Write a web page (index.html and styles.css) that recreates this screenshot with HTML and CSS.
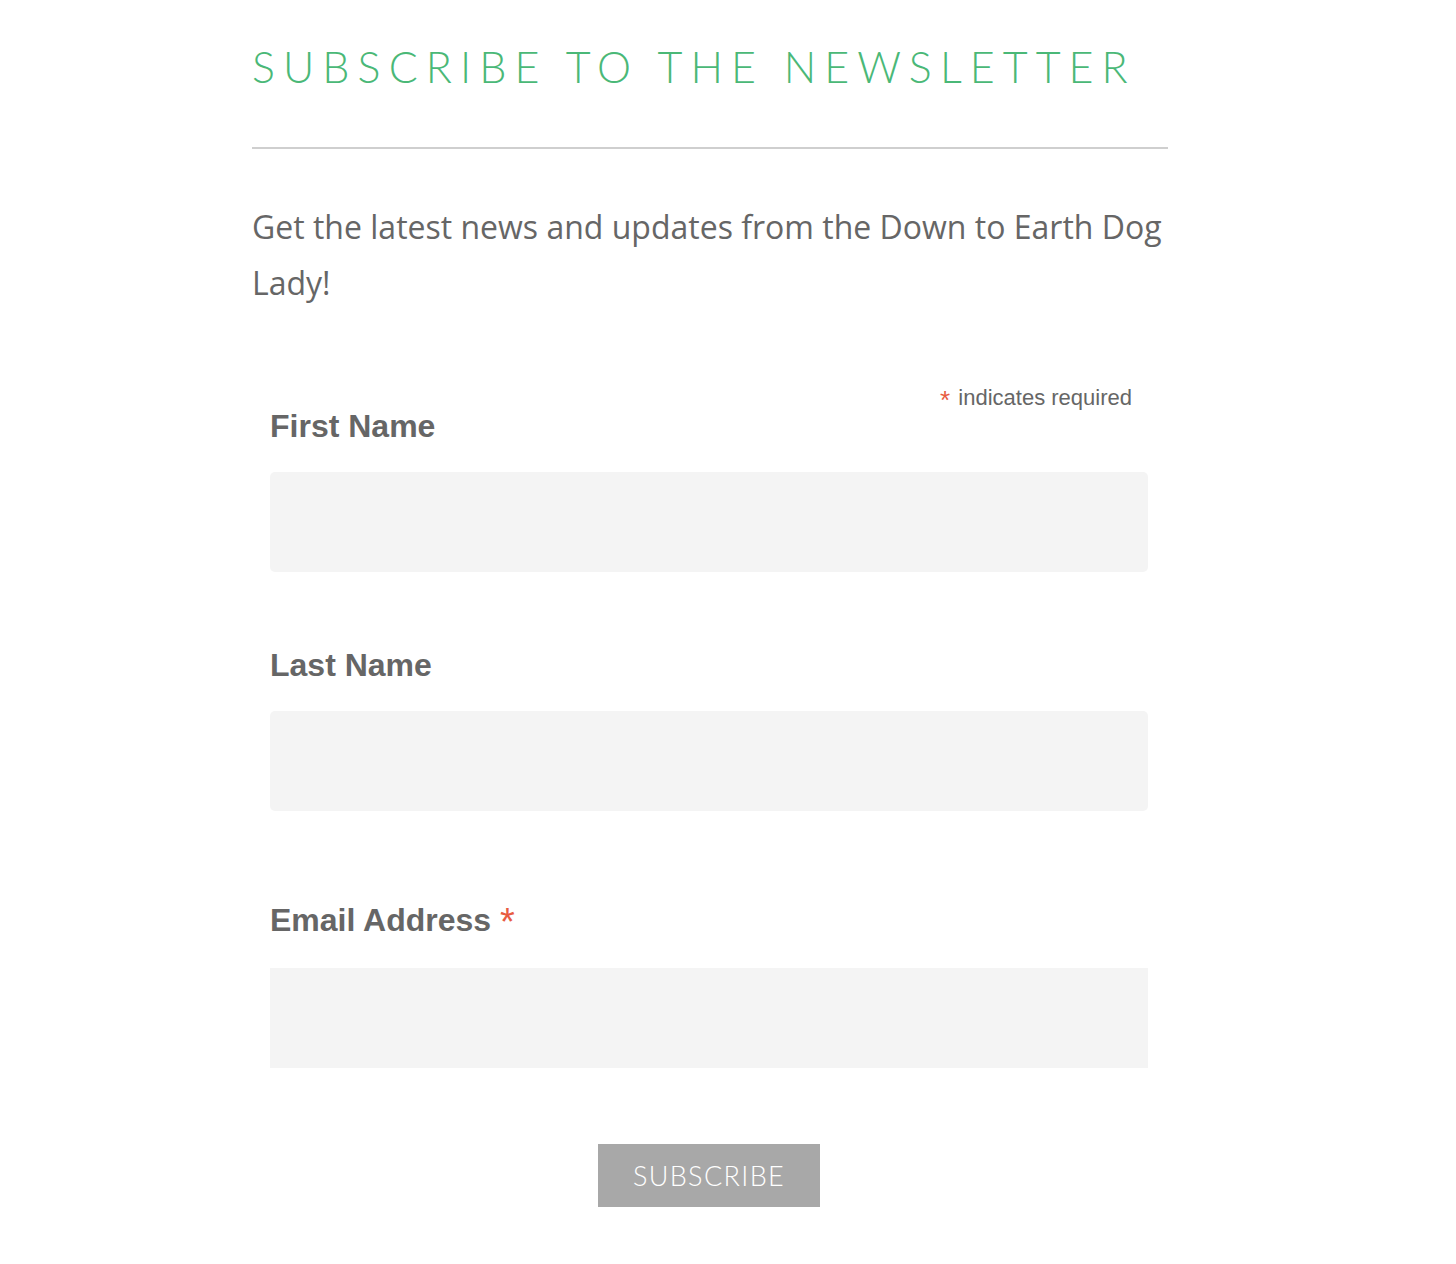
FILE: index.html
```html
<!DOCTYPE html>
<html lang="en">
<head>
<meta charset="utf-8">
<title>Subscribe to the Newsletter</title>
<link rel="stylesheet" href="styles.css">
</head>
<body>
<main class="wrap">
  <h1 class="title">Subscribe to the Newsletter</h1>
  <hr class="rule">
  <p class="intro">Get the latest news and updates from the Down to Earth Dog Lady!</p>
  <form class="signup" onsubmit="return false">
    <div class="req-note"><span class="star star-small">*</span> indicates required</div>
    <div class="field">
      <label class="label" for="fname">First Name</label>
      <input class="input" id="fname" type="text">
    </div>
    <div class="field field-2">
      <label class="label" for="lname">Last Name</label>
      <input class="input" id="lname" type="text">
    </div>
    <div class="field field-3">
      <label class="label" for="email">Email Address <span class="star star-big">*</span></label>
      <input class="input input-square" id="email" type="email">
    </div>
    <div class="actions">
      <button class="btn" type="submit">Subscribe</button>
    </div>
  </form>
</main>
</body>
</html>
```
FILE: styles.css
```css
* { box-sizing: border-box; }
html, body { margin: 0; padding: 0; background: #fff; }
.wrap {
  width: 916px;
  margin-left: 252px;
  padding-top: 45px;
  padding-bottom: 56px;
}
.title {
  margin: 0;
  font-family: "Lato", "Liberation Sans", sans-serif;
  font-weight: 300;
  font-size: 43px;
  line-height: 1;
  letter-spacing: 8.05px;
  text-transform: uppercase;
  color: #4ab877;
  white-space: nowrap;
}
.rule {
  margin: 59px 0 0;
  border: 0;
  height: 2px;
  background: #cfcfcf;
}
.intro {
  margin: 50px 0 0;
  font-family: "Open Sans", "Liberation Sans", sans-serif;
  font-size: 32px;
  line-height: 56px;
  color: #666;
}
.signup {
  margin-top: 73px;
  padding: 0 18px;
  font-family: "Liberation Sans", Arial, sans-serif;
  color: #666;
}
.req-note {
  text-align: right;
  font-size: 22px;
  line-height: 24px;
  padding-right: 18px;
  height: 23px;
}
.star { color: #e85c41; font-weight: normal; position: relative; }
.star-small { font-size: 26px; top: 4px; margin-right: 2px; }
.star-big { font-size: 38px; top: 4px; line-height: 0; }
.field { display: flex; flex-direction: column; }
.field-2 { margin-top: 74px; }
.field-3 { margin-top: 90px; }
.label {
  font-size: 32px;
  font-weight: bold;
  line-height: 38px;
  color: #666;
  margin-bottom: 27px;
}
.field-3 .label { margin-bottom: 29px; }
.input {
  width: 878px;
  height: 100px;
  border: 0;
  border-radius: 5px;
  background: #f4f4f4;
  font: inherit;
  outline: none;
}
.input-square { border-radius: 0; }
.actions {
  display: flex;
  justify-content: center;
  margin-top: 76px;
  padding-right: 2px;
}
.btn {
  width: 222px;
  height: 63px;
  border: 0;
  border-radius: 0;
  background: #a8a8a8;
  color: #fff;
  font-family: "Lato", "Liberation Sans", sans-serif;
  font-weight: 300;
  font-size: 27px;
  letter-spacing: 0.05em;
  text-transform: uppercase;
  cursor: pointer;
}
```
